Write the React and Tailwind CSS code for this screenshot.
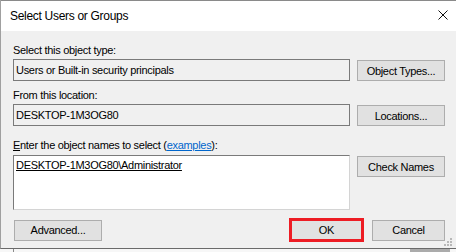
import React from "react";

const Button = ({ children, className = "" }) => (
  <div
    className={`h-[21px] flex items-center justify-center bg-[#e1e1e1] border border-[#adadad] text-black ${className}`}
  >
    {children}
  </div>
);

const ReadOnlyBox = ({ children }) => (
  <div className="flex-1 h-[22px] flex items-center pl-[2px] pb-[1px] bg-[#f0f0f0] border border-[#7a7a7a] text-black">
    {children}
  </div>
);

const App = () => {
  return (
    <div className="w-[456px] h-[252px] overflow-hidden bg-[#f7f7f7] relative font-['Liberation_Sans',Arial,sans-serif] text-[11px] tracking-[-0.3px] leading-[14px] text-black">
      <div className="w-[456px] h-[249px] flex flex-col border-l border-b border-l-[#a0a0a0] border-b-[#6a6a6a]">
        {/* title bar */}
        <div className="h-[31px] flex items-center justify-between bg-white border-t border-t-[#8a8a8a] pl-[9px] pr-[8px]">
          <span className="text-[12px] tracking-[-0.3px] text-black">Select Users or Groups</span>
          <svg width="10" height="10" viewBox="0 0 10 10" className="-mt-[2px]">
            <path d="M0.5 0.5 L9.5 9.5 M9.5 0.5 L0.5 9.5" stroke="#111" strokeWidth="1" fill="none" />
          </svg>
        </div>

        {/* body */}
        <div className="flex-1 flex flex-col bg-[#f0f0f0] pl-[12px] pr-[11px] pt-[12px]">
          <div className="h-[14px]">Select this object type:</div>
          <div className="flex items-start gap-[7px] mt-[2px]">
            <ReadOnlyBox>Users or Built-in security principals</ReadOnlyBox>
            <Button className="w-[88px] mt-[1px]">Object Types...</Button>
          </div>

          <div className="h-[14px] mt-[7px]">From this location:</div>
          <div className="flex items-start gap-[7px] mt-[2px]">
            <ReadOnlyBox>DESKTOP-1M3OG80</ReadOnlyBox>
            <Button className="w-[88px] mt-[1px]">Locations...</Button>
          </div>

          <div className="h-[14px] mt-[12px]">
            <span className="underline">E</span>nter the object names to select (
            <span className="text-[#0066cc] underline">examples</span>):
          </div>
          <div className="flex items-start gap-[7px] mt-[3px]">
            <div className="flex-1 h-[55px] bg-white border border-t-[#7a7a7a] border-l-[#7a7a7a] border-r-[#d4d4d4] border-b-[#d4d4d4] pl-[2px] pt-[2px]">
              <span className="underline">DESKTOP-1M3OG80\Administrator</span>
            </div>
            <Button className="w-[88px] mt-[1px]">Check Names</Button>
          </div>

          <div className="flex items-center mt-[8px] h-[24px]">
            <Button className="w-[88px] ml-[1px]">Advanced...</Button>
            <div className="flex-1" />
            <div className="w-[75px] h-[24px] flex items-center justify-center bg-[#e1e1e1] border-[3px] border-[#ed1c24]">
              OK
            </div>
            <Button className="w-[73px] ml-[8px]">Cancel</Button>
          </div>
        </div>
      </div>

      {/* strip of the window behind */}
      <div className="h-[3px] flex">
        <div className="w-[13px]" />
        <div className="w-px bg-[#8a8a8a]" />
        <div className="flex-1" />
        <div className="w-[40px] bg-[#3a3a3a] opacity-40 mr-[6px]" />
      </div>

      {/* resize grip */}
      <svg width="9" height="9" viewBox="0 0 9 9" className="absolute left-[444px] top-[238px]">
        <rect x="6" y="0" width="2" height="2" fill="#b8b8b8" />
        <rect x="3" y="3" width="2" height="2" fill="#b8b8b8" />
        <rect x="6" y="3" width="2" height="2" fill="#b8b8b8" />
        <rect x="0" y="6" width="2" height="2" fill="#b8b8b8" />
        <rect x="3" y="6" width="2" height="2" fill="#b8b8b8" />
        <rect x="6" y="6" width="2" height="2" fill="#b8b8b8" />
      </svg>
    </div>
  );
};

export default App;
